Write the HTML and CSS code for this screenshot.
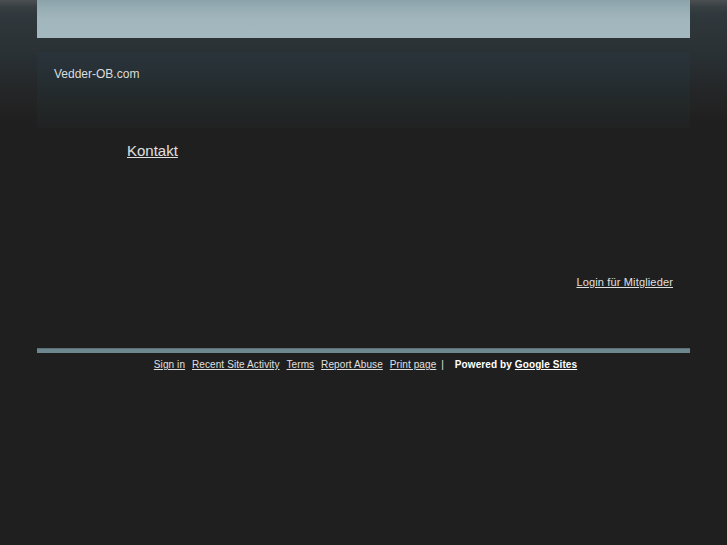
FILE: index.html
```html
<!DOCTYPE html>
<html>
<head>
<meta charset="utf-8">
<title>Vedder-OB.com</title>
<link rel="stylesheet" href="styles.css">
</head>
<body>
<div class="page">
<div class="wrap">
  <div class="banner"></div>
  <div class="titlebar">
    <div class="sitename">Vedder-OB.com</div>
  </div>
  <div class="main">
    <a class="kontakt" href="#">Kontakt</a>
    <div class="login-row"><a class="login" href="#">Login für Mitglieder</a></div>
  </div>
  <div class="divider"></div>
  <div class="footer">
    <a href="#">Sign in</a>
    <a href="#">Recent Site Activity</a>
    <a href="#">Terms</a>
    <a href="#">Report Abuse</a>
    <a href="#">Print page</a>
    <span class="sep">|</span>
    <span class="powered">Powered by <a href="#">Google Sites</a></span>
  </div>
</div>
</div>
</body>
</html>
```
FILE: styles.css
```css
html {
  background: #1f1f1f;
}
html, body {
  margin: 0;
  padding: 0;
}
body {
  font-family: "Liberation Sans", Arial, sans-serif;
  color: #dddddd;
}
.page {
  min-height: 545px;
  background-color: #1f1f1f;
  background-image: linear-gradient(to bottom,
    #4b4f51 0px, #3a4144 6px, #2f383c 14px, #2d3539 30px,
    #2a3236 50px, #272c2f 70px, #242627 90px, #222222 110px, #1f1f1f 122px, #1f1f1f 130px);
  background-repeat: no-repeat;
  background-size: 100% 130px;
}
.wrap {
  width: 653px;
  margin: 0 auto;
}
.banner {
  height: 38px;
  background: linear-gradient(to bottom, #8da3ab 0px, #97adb4 8px, #a2b7bd 20px, #a4b9bf 38px);
}
.titlebar {
  margin-top: 14px;
  height: 76px;
  background: linear-gradient(to bottom, #29333a 0px, #263035 20px, #232829 50px, #202222 76px);
  box-sizing: border-box;
  padding: 15px 0 0 17px;
}
.sitename {
  font-size: 12px;
  color: #dcdcdc;
  line-height: 14px;
}
.main {
  height: 220px;
  padding: 14px 0 0 90px;
  box-sizing: border-box;
  display: flex;
  flex-direction: column;
}
.kontakt {
  color: #e0e0e0;
  font-size: 15px;
  line-height: 18px;
  align-self: flex-start;
}
.login-row {
  margin-top: 115px;
  display: flex;
  justify-content: flex-end;
  padding-right: 17px;
}
.login {
  color: #e0e0e0;
  font-size: 11px;
  letter-spacing: 0.15px;
  line-height: 14px;
}
.divider {
  height: 5px;
  background: #6d878f;
  border-top: 1px solid #5b6f75;
  box-sizing: border-box;
}
.footer {
  text-align: center;
  font-size: 10px;
  letter-spacing: 0.1px;
  line-height: 12px;
  padding-top: 6px;
  padding-left: 2px;
  color: #e0e0e0;
}
.footer a {
  color: #e0e0e0;
  margin: 0 2px;
}
.sep {
  margin-right: 8px;
}
.powered {
  font-weight: bold;
  color: #ffffff;
}
.powered a {
  color: #ffffff;
  margin: 0;
}
```
